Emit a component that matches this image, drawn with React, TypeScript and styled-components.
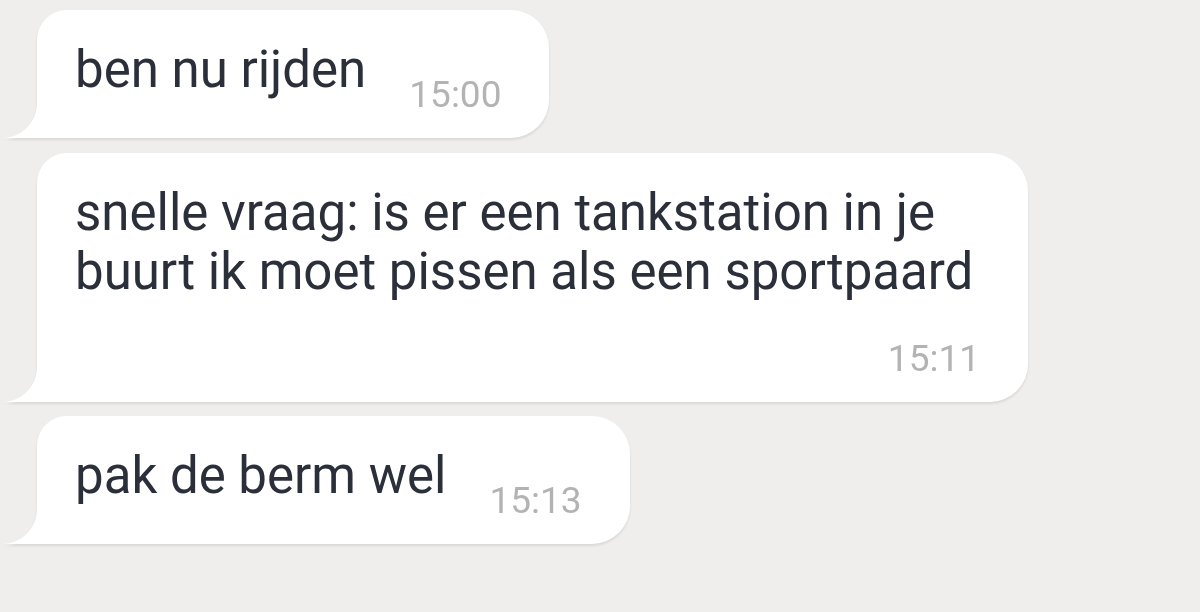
import React from "react";
import styled, { createGlobalStyle } from "styled-components";

const GlobalStyle = createGlobalStyle`
  html, body {
    margin: 0;
    padding: 0;
    background: #efeeec;
  }
  body {
    font-family: Roboto, "Liberation Sans", Arial, sans-serif;
    -webkit-font-smoothing: antialiased;
  }
`;

const Screen = styled.div`
  width: 1200px;
  height: 612px;
  box-sizing: border-box;
  padding: 10px 0 0 37px;
  display: flex;
  flex-direction: column;
  align-items: flex-start;
  gap: 14.5px;
  overflow: hidden;
  background: #efeeec;
`;

const Bubble = styled.div`
  position: relative;
  box-sizing: border-box;
  max-width: 991px;
  padding: 30px 48px 22px 38px;
  background: #ffffff;
  border-radius: 30px 38px 38px 0;
  filter: drop-shadow(0 2px 1px rgba(0, 0, 0, 0.09));

  &::before {
    content: "";
    position: absolute;
    left: -35px;
    bottom: 0;
    width: 35px;
    height: 35px;
    background: radial-gradient(circle at 0 0, transparent 34.5px, #ffffff 35.5px);
  }
`;

const Row = styled.div`
  display: flex;
  flex-wrap: wrap;
  column-gap: 43px;
  align-items: flex-start;
`;

const Text = styled.span`
  font-size: 51px;
  line-height: 59px;
  color: #2b2f3a;
`;

const Time = styled.span<{ $drop: number }>`
  margin-left: auto;
  margin-top: ${(p) => p.$drop}px;
  font-size: 37px;
  line-height: 43px;
  color: #b3b3b3;
  white-space: nowrap;
`;

const messages = [
  { text: "ben nu rijden", time: "15:00", drop: 33 },
  {
    text: "snelle vraag: is er een tankstation in je buurt ik moet pissen als een sportpaard",
    time: "15:11",
    drop: 36,
  },
  { text: "pak de berm wel", time: "15:13", drop: 33 },
];

export default function App() {
  return (
    <>
      <GlobalStyle />
      <Screen>
        {messages.map((m) => (
          <Bubble key={m.time}>
            <Row>
              <Text>{m.text}</Text>
              <Time $drop={m.drop}>{m.time}</Time>
            </Row>
          </Bubble>
        ))}
      </Screen>
    </>
  );
}
